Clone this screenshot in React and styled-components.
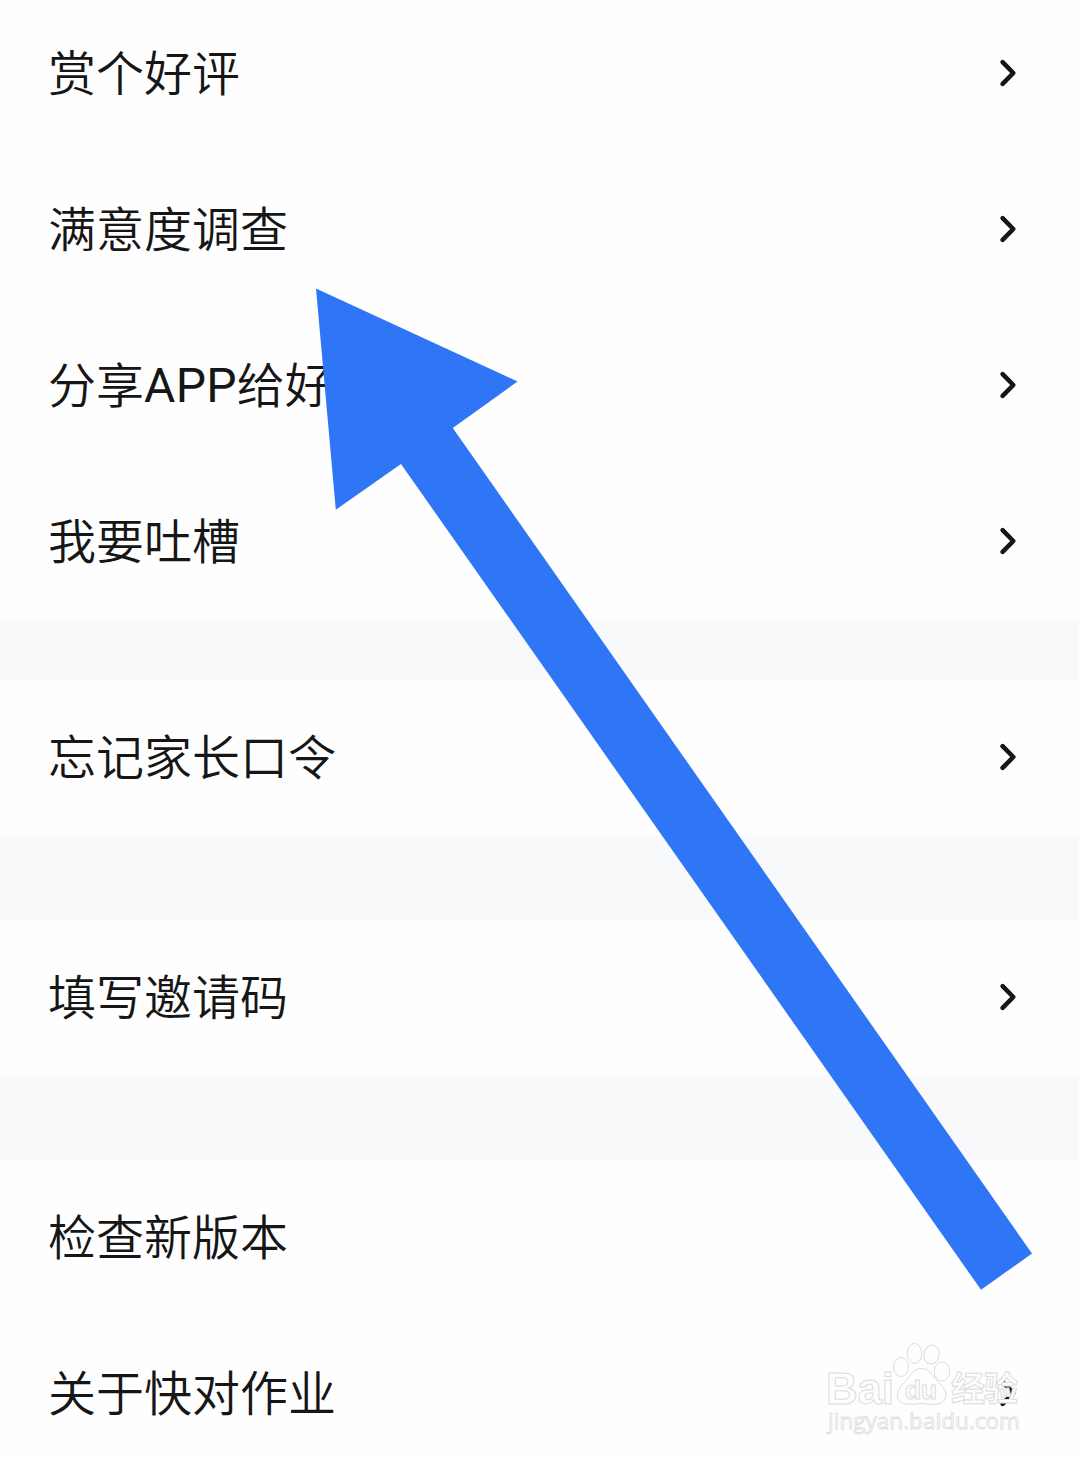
import React from 'react';
import styled, { createGlobalStyle } from 'styled-components';

const groups = [
  {
    gap: 60,
    items: [
      { id: 'rate', title: '赏个好评' },
      { id: 'survey', title: '满意度调查' },
      { id: 'share', title: <>分享<Latin>APP</Latin>给好友</> },
      { id: 'feedback', title: '我要吐槽' },
    ],
  },
  { gap: 84, items: [{ id: 'password', title: '忘记家长口令' }] },
  { gap: 84, items: [{ id: 'invite', title: '填写邀请码' }] },
  {
    gap: 0,
    items: [
      { id: 'version', title: '检查新版本', plain: true },
      { id: 'about', title: '关于快对作业' },
    ],
  },
];

function Latin({ children }) {
  return <LatinText>{children}</LatinText>;
}

const Chevron = () => (
  <ChevronIcon viewBox="0 0 24 36">
    <path d="M6.6 7.2 L17.3 18 L6.6 28.8" />
  </ChevronIcon>
);

const Watermark = () => (
  <WatermarkIcon viewBox="0 0 230 120">
    <BrandText x="16" y="73.500" fontSize="44" textLength="68" lengthAdjust="spacingAndGlyphs">Bai</BrandText>
    <ellipse cx="91" cy="37" rx="7.5" ry="9.5" />
    <ellipse cx="104.500" cy="23.500" rx="7.3" ry="10" />
    <ellipse cx="121.500" cy="24.500" rx="7.6" ry="9.5" transform="rotate(8 121.500 24.500)" />
    <ellipse cx="132" cy="41.500" rx="7.7" ry="9.5" />
    <path d="M111 38.500 C120 38.500 123.500 47 129 53 C135 58 137.500 64 135 69 C132.500 75 125 75 111 73.500 C98 75 90 75 87.500 68 C86 61 91 56 96 51 C101 45 103 38.500 111 38.500 Z" />
    <BrandText x="95" y="69" fontSize="26" textLength="32" lengthAdjust="spacingAndGlyphs">du</BrandText>
    <CjkText x="141" y="70.500" fontSize="34" textLength="67">经验</CjkText>
    <SiteText x="18" y="99" fontSize="22" textLength="192" lengthAdjust="spacingAndGlyphs">jingyan.baidu.com</SiteText>
  </WatermarkIcon>
);

const App = () => {
  return (
    <Page>
      <GlobalStyle />
      <List>
        {groups.map((group, index) => (
          <Group key={index} $gap={group.gap}>
            {group.items.map((item) => (
              <Row key={item.id}>
                <Title>{item.title}</Title>
                {!item.plain && <Chevron />}
              </Row>
            ))}
          </Group>
        ))}
      </List>
      <Pointer viewBox="0 0 1079 1459">
        <polygon points="316,288.500 517.500,381.500 452.800,428 1032,1253.500 981,1289.800 401,464 335.800,509.800" />
      </Pointer>
      <Watermark />
    </Page>
  );
};

const GlobalStyle = createGlobalStyle`
  body {
    margin: 0;
    background: #fefefe;
  }
`;

const Page = styled.div`
  position: relative;
  height: 1459px;
  overflow: hidden;
  background: #f7f9fb;
  font-family: Roboto, 'Noto Sans CJK SC', sans-serif;
`;

const List = styled.div`
  display: flex;
  flex-direction: column;
  margin-top: -4px;
`;

const Group = styled.div`
  background: #fefefe;
  margin-bottom: ${(props) => props.$gap}px;
`;

const Row = styled.div`
  display: flex;
  align-items: center;
  justify-content: space-between;
  height: 156px;
  padding: 0 59px 0 48px;
  box-sizing: border-box;
`;

const Title = styled.span`
  padding-top: 2px;
  font-size: 48px;
  font-weight: 350;
  line-height: 70px;
  color: #161616;
  white-space: nowrap;
`;

const LatinText = styled.span`
  position: relative;
  top: -1px;
  font-weight: 400;
  letter-spacing: 0.3px;
`;

const ChevronIcon = styled.svg`
  width: 24px;
  height: 36px;
  margin-top: -2px;
  fill: none;
  stroke: #161616;
  stroke-width: 4.6;
  stroke-linecap: round;
  stroke-linejoin: round;
`;

const Pointer = styled.svg`
  position: absolute;
  top: 0;
  left: 0;
  width: 1079px;
  height: 1459px;
  fill: #2f76f6;
`;

const WatermarkIcon = styled.svg`
  position: absolute;
  left: 810px;
  top: 1330px;
  width: 230px;
  height: 120px;
  fill: #fefefe;
  stroke: #dcdcdc;
  stroke-width: 1;
`;

const BrandText = styled.text`
  font-family: 'Liberation Sans', sans-serif;
  font-weight: 700;
`;

const CjkText = styled.text`
  font-family: 'Noto Sans CJK SC', sans-serif;
  font-weight: 700;
`;

const SiteText = styled.text`
  font-family: 'Open Sans', sans-serif;
  font-weight: 500;
  stroke-width: 0.8;
`;

export default App;
